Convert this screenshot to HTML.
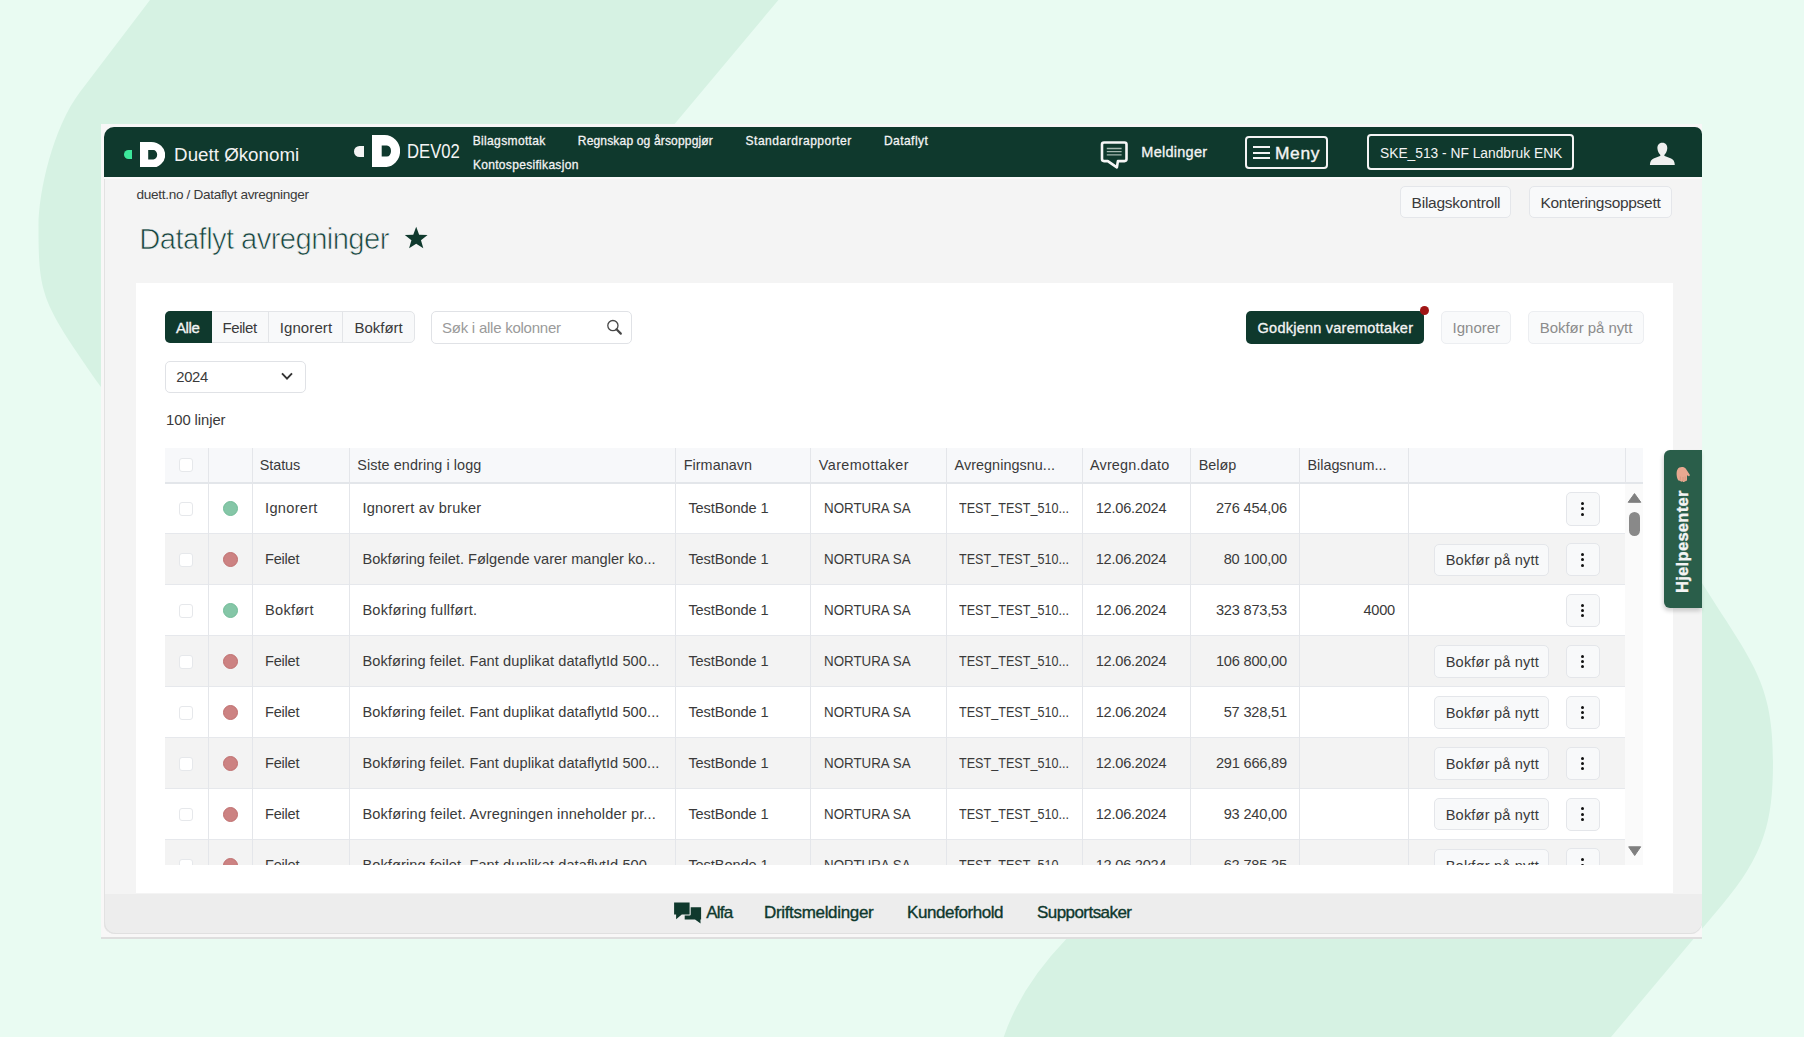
<!DOCTYPE html>
<html><head><meta charset="utf-8"><title>Dataflyt avregninger</title>
<style>
html,body{margin:0;padding:0;}
body{width:1804px;height:1037px;position:relative;overflow:hidden;background:#e9fbf2;font-family:"Liberation Sans",sans-serif;}
.r{position:absolute;}
.t{position:absolute;white-space:nowrap;}
</style></head><body>
<svg class="r" style="left:0;top:0" width="1804" height="1037" viewBox="0 0 1804 1037"><path d="M150,0 L80,92 C53.4,127 38.5,191 38.5,226 C38.5,296 41.5,302 101,387 L101,460 L400,460 L675,123.5 L778.4,0 Z" fill="#d6f2e3"/><path d="M1702,583 C1752.4,663 1773,682 1773,762 C1773,822 1764,855 1722,905 L1611,1037 L1003.7,1037 Q1021,986.3 1065.6,939.8 L1110,893.5 L1300,560 L1702,560 Z" fill="#d6f2e3"/></svg>
<div class="r" style="left:101.00px;top:124.00px;width:1601.00px;height:815.00px;background:#f8f7f7;"></div>
<div class="r" style="left:101.00px;top:936.70px;width:1601.00px;height:2.50px;background:#dedede;"></div>
<div class="r" style="left:104.00px;top:127.00px;width:1598.00px;height:807.00px;background:#f4f4f4;border-radius:10px 7px 10px 10px;box-shadow:inset 1px 0 0 #e2e2e2;"></div>
<div class="r" style="left:104.00px;top:127.00px;width:1598.00px;height:50.00px;background:#0f392d;border-radius:10px 7px 0 0;"></div>
<div class="r" style="left:104.00px;top:177.00px;width:1598.00px;height:1.50px;background:#fafafa;"></div>
<div class="r" style="left:104.00px;top:893.50px;width:1598.00px;height:40.50px;background:#ededed;border-radius:0 0 12px 12px;box-shadow:inset 0 -1px 0 #e0e0e0, inset 1px 0 0 #e2e2e2;"></div>
<div class="r" style="left:136.00px;top:282.60px;width:1536.70px;height:610.90px;background:#ffffff;"></div>
<div class="r" style="left:123.50px;top:149.60px;width:8.90px;height:9.70px;background:#3ce89b;border-radius:5px 0 0 5px;"></div>
<svg class="r" style="left:140.00px;top:141.50px" width="25.20" height="25.90" viewBox="0 0 25.20 25.90"><path fill-rule="evenodd" fill="#ffffff" d="M0,0 H11.34 A13.86,12.95 0 0 1 11.34,25.90 H0 Z M8.20,8.10 H13.36 A3.83,4.65 0 0 1 13.36,17.40 H8.20 Z"/></svg>
<div class="t" style="left:174.10px;top:145.73px;font-size:18.75px;line-height:18.75px;letter-spacing:0.003px;font-weight:400;color:#f2f2f2;">Duett Økonomi</div>
<div class="r" style="left:354.00px;top:145.50px;width:10.10px;height:11.90px;background:#f4f4f4;border-radius:6px 0 0 6px;"></div>
<svg class="r" style="left:372.40px;top:135.40px" width="28.10" height="32.10" viewBox="0 0 28.10 32.10"><path fill-rule="evenodd" fill="#ffffff" d="M0,0 H12.65 A15.46,16.05 0 0 1 12.65,32.10 H0 Z M9.70,10.40 H14.96 A4.05,5.60 0 0 1 14.96,21.60 H9.70 Z"/></svg>
<div class="t" style="left:407.00px;top:142.29px;font-size:19.50px;line-height:19.50px;letter-spacing:0.000px;font-weight:400;color:#f4f4f4;transform:scaleX(0.8558);transform-origin:0.00px 0;">DEV02</div>
<div class="t" style="left:472.70px;top:134.79px;font-size:12.06px;line-height:12.06px;letter-spacing:0.336px;font-weight:400;color:#f4f4f4;-webkit-text-stroke:0.27px #f4f4f4;">Bilagsmottak</div>
<div class="t" style="left:577.80px;top:134.79px;font-size:12.06px;line-height:12.06px;letter-spacing:0.150px;font-weight:400;color:#f4f4f4;-webkit-text-stroke:0.27px #f4f4f4;">Regnskap og årsoppgjør</div>
<div class="t" style="left:745.50px;top:134.79px;font-size:12.06px;line-height:12.06px;letter-spacing:0.502px;font-weight:400;color:#f4f4f4;-webkit-text-stroke:0.27px #f4f4f4;">Standardrapporter</div>
<div class="t" style="left:884.00px;top:134.79px;font-size:12.06px;line-height:12.06px;letter-spacing:0.417px;font-weight:400;color:#f4f4f4;-webkit-text-stroke:0.27px #f4f4f4;">Dataflyt</div>
<div class="t" style="left:472.90px;top:158.89px;font-size:12.06px;line-height:12.06px;letter-spacing:0.295px;font-weight:400;color:#f4f4f4;-webkit-text-stroke:0.27px #f4f4f4;">Kontospesifikasjon</div>
<svg class="r" style="left:1099px;top:140px" width="32" height="31" viewBox="0 0 32 31"><path d="M5,2.5 H25.5 Q27.5,2.5 27.5,4.5 V19.1 Q27.5,21.1 25.5,21.1 H18.9 L17.9,27.4 L8.8,21.1 H5 Q3,21.1 3,19.1 V4.5 Q3,2.5 5,2.5 Z" fill="none" stroke="#f6f6f6" stroke-width="2.6" stroke-linejoin="round"/><path d="M7.8,8.5 H22.6 M7.8,11.6 H22.6 M7.8,14.9 H22.6" stroke="#a5b8b0" stroke-width="1.4"/></svg>
<div class="t" style="left:1141.30px;top:145.13px;font-size:14.50px;line-height:14.50px;letter-spacing:0.268px;font-weight:400;color:#f4f4f4;-webkit-text-stroke:0.32px #f4f4f4;">Meldinger</div>
<div class="r" style="left:1244.90px;top:135.60px;width:83.20px;height:33.70px;box-sizing:border-box;border:2px solid #f4f4f4;border-radius:4px;"></div>
<div class="r" style="left:1252.80px;top:146.40px;width:17.40px;height:2.00px;background:#f4f4f4;"></div>
<div class="r" style="left:1252.80px;top:151.70px;width:17.40px;height:2.00px;background:#f4f4f4;"></div>
<div class="r" style="left:1252.80px;top:156.80px;width:17.40px;height:2.00px;background:#f4f4f4;"></div>
<div class="t" style="left:1275.00px;top:144.87px;font-size:17.40px;line-height:17.40px;letter-spacing:0.619px;font-weight:400;color:#f4f4f4;-webkit-text-stroke:0.38px #f4f4f4;">Meny</div>
<div class="r" style="left:1367.40px;top:133.70px;width:206.60px;height:36.40px;box-sizing:border-box;border:2px solid #f4f4f4;border-radius:4px;"></div>
<div class="t" style="left:1379.80px;top:145.48px;font-size:15.50px;line-height:15.50px;letter-spacing:0.000px;font-weight:400;color:#f4f4f4;transform:scaleX(0.8890);transform-origin:0.00px 0;">SKE_513 - NF Landbruk ENK</div>
<svg class="r" style="left:1649px;top:142px" width="27" height="24" viewBox="0 0 27 24"><path fill="#efefef" d="M13.3,0.8 C9.8,0.8 8.3,3.5 8.4,6.3 C8.5,9.2 10,11.6 11.4,13.1 C11.6,13.5 11.4,13.9 11,14.1 L4.6,16.5 C2.3,17.4 1,19.6 0.9,22.9 H25.8 C25.7,19.6 24.4,17.4 22.1,16.5 L15.7,14.1 C15.3,13.9 15.1,13.5 15.3,13.1 C16.7,11.6 18.2,9.2 18.3,6.3 C18.4,3.5 16.9,0.8 13.3,0.8 Z"/></svg>
<div class="t" style="left:136.60px;top:188.49px;font-size:13.60px;line-height:13.60px;letter-spacing:-0.326px;font-weight:400;color:#3a3a3a;">duett.no / Dataflyt avregninger</div>
<div class="t" style="left:139.30px;top:225.08px;font-size:29.20px;line-height:29.20px;letter-spacing:-0.586px;font-weight:400;color:#16443e;-webkit-text-stroke:0.7px #f4f4f4;">Dataflyt avregninger</div>
<svg class="r" style="left:403.6px;top:226.3px" width="24.4" height="24.4" viewBox="0 0 24 24"><path fill="#0f392d" d="M12,0.8 L14.9,8.6 L23.2,8.9 L16.7,14 L19,22 L12,17.4 L5,22 L7.3,14 L0.8,8.9 L9.1,8.6 Z"/></svg>
<div class="r" style="left:1400.30px;top:186.30px;width:110.80px;height:32.00px;background:#f8f9fa;box-sizing:border-box;border:1px solid #e4e6ea;border-radius:5px;"></div>
<div class="t" style="left:1411.60px;top:194.68px;font-size:15.50px;line-height:15.50px;letter-spacing:-0.248px;font-weight:400;color:#3a3a3a;">Bilagskontroll</div>
<div class="r" style="left:1528.90px;top:186.30px;width:143.00px;height:32.00px;background:#f8f9fa;box-sizing:border-box;border:1px solid #e4e6ea;border-radius:5px;"></div>
<div class="t" style="left:1540.50px;top:194.68px;font-size:15.50px;line-height:15.50px;letter-spacing:-0.296px;font-weight:400;color:#3a3a3a;">Konteringsoppsett</div>
<div class="r" style="left:164.70px;top:310.80px;width:250.00px;height:32.60px;background:#f8f9fa;box-sizing:border-box;border:1px solid #e3e5e8;border-radius:5px;"></div>
<div class="r" style="left:164.70px;top:310.80px;width:46.90px;height:32.60px;background:#0f392d;border-radius:5px 0 0 5px;"></div>
<div class="r" style="left:267.60px;top:311.80px;width:1.00px;height:30.60px;background:#e3e5e8;"></div>
<div class="r" style="left:342.40px;top:311.80px;width:1.00px;height:30.60px;background:#e3e5e8;"></div>
<div class="t" style="left:176.00px;top:319.80px;font-size:15.00px;line-height:15.00px;letter-spacing:-0.383px;font-weight:400;color:#f4f4f4;-webkit-text-stroke:0.33px #f4f4f4;">Alle</div>
<div class="t" style="left:222.40px;top:319.80px;font-size:15.00px;line-height:15.00px;letter-spacing:-0.375px;font-weight:400;color:#3a3a3a;">Feilet</div>
<div class="t" style="left:279.70px;top:319.80px;font-size:15.00px;line-height:15.00px;letter-spacing:0.104px;font-weight:400;color:#3a3a3a;">Ignorert</div>
<div class="t" style="left:354.40px;top:319.80px;font-size:15.00px;line-height:15.00px;letter-spacing:0.004px;font-weight:400;color:#3a3a3a;">Bokført</div>
<div class="r" style="left:430.50px;top:311.20px;width:201.20px;height:32.50px;background:#fff;box-sizing:border-box;border:1px solid #e0e2e6;border-radius:5px;"></div>
<div class="t" style="left:442.00px;top:320.20px;font-size:15.00px;line-height:15.00px;letter-spacing:-0.243px;font-weight:400;color:#9a9a9a;">Søk i alle kolonner</div>
<svg class="r" style="left:605px;top:318px" width="18" height="18" viewBox="0 0 18 18"><circle cx="7.9" cy="7.6" r="5.1" fill="none" stroke="#474747" stroke-width="1.3"/><path d="M11.5,11.3 L15.8,15.6" stroke="#474747" stroke-width="2.2" stroke-linecap="round"/></svg>
<div class="r" style="left:1245.70px;top:311.00px;width:178.60px;height:32.50px;background:#0f392d;border-radius:5px;"></div>
<div class="t" style="left:1257.60px;top:320.63px;font-size:14.50px;line-height:14.50px;letter-spacing:0.234px;font-weight:400;color:#f4f4f4;-webkit-text-stroke:0.32px #f4f4f4;">Godkjenn varemottaker</div>
<div class="r" style="left:1420.40px;top:306.20px;width:9.00px;height:9.00px;background:#a01515;border-radius:50%;"></div>
<div class="r" style="left:1441.20px;top:311.00px;width:70.30px;height:32.50px;background:#f9fafb;box-sizing:border-box;border:1px solid #eceef1;border-radius:5px;"></div>
<div class="t" style="left:1452.60px;top:320.20px;font-size:15.00px;line-height:15.00px;letter-spacing:-0.008px;font-weight:400;color:#8c8c8c;">Ignorer</div>
<div class="r" style="left:1527.60px;top:311.00px;width:116.10px;height:32.50px;background:#f9fafb;box-sizing:border-box;border:1px solid #eceef1;border-radius:5px;"></div>
<div class="t" style="left:1539.80px;top:320.20px;font-size:15.00px;line-height:15.00px;letter-spacing:-0.060px;font-weight:400;color:#8c8c8c;">Bokfør på nytt</div>
<div class="r" style="left:164.80px;top:360.50px;width:141.00px;height:32.50px;background:#fff;box-sizing:border-box;border:1px solid #e0e2e6;border-radius:5px;"></div>
<div class="t" style="left:176.30px;top:369.87px;font-size:14.80px;line-height:14.80px;letter-spacing:-0.343px;font-weight:400;color:#3a3a3a;">2024</div>
<svg class="r" style="left:280px;top:371px" width="14" height="10" viewBox="0 0 14 10"><path d="M2,2.3 L7,7.6 L12,2.3" fill="none" stroke="#333" stroke-width="1.9"/></svg>
<div class="t" style="left:166.10px;top:413.27px;font-size:14.80px;line-height:14.80px;letter-spacing:-0.076px;font-weight:400;color:#3a3a3a;">100 linjer</div>
<div class="r" style="left:165.00px;top:447.80px;width:1478.40px;height:34.20px;background:#f7f8fa;"></div>
<div class="r" style="left:165.00px;top:482.00px;width:1478.40px;height:2.00px;background:#e3e6ea;"></div>
<div class="r" style="left:1625.40px;top:484.00px;width:18.00px;height:381.30px;background:#fafafa;"></div>
<div class="r" style="left:0;top:0;width:1804px;height:865.3px;overflow:hidden;">
<div class="r" style="left:165.00px;top:483.50px;width:1460.40px;height:50.87px;background:#ffffff;"></div>
<div class="r" style="left:165.00px;top:533.37px;width:1460.40px;height:1.50px;background:#e6e8ec;"></div>
<div class="r" style="left:179.10px;top:502.44px;width:13.80px;height:13.80px;background:#fff;box-sizing:border-box;border:1px solid #e6e8eb;border-radius:3px;"></div>
<div class="r" style="left:222.50px;top:501.44px;width:15.00px;height:15.00px;background:#85c6a7;border-radius:50%;box-sizing:border-box;border:1px solid #72bc98;"></div>
<div class="t" style="left:265.10px;top:501.48px;font-size:14.60px;line-height:14.60px;letter-spacing:0.286px;font-weight:400;color:#3a3a3a;">Ignorert</div>
<div class="t" style="left:362.40px;top:501.48px;font-size:14.60px;line-height:14.60px;letter-spacing:0.214px;font-weight:400;color:#3a3a3a;">Ignorert av bruker</div>
<div class="t" style="left:688.40px;top:501.48px;font-size:14.60px;line-height:14.60px;letter-spacing:-0.098px;font-weight:400;color:#3a3a3a;">TestBonde 1</div>
<div class="t" style="left:823.60px;top:501.48px;font-size:14.60px;line-height:14.60px;letter-spacing:0.000px;font-weight:400;color:#3a3a3a;transform:scaleX(0.9147);transform-origin:0.00px 0;">NORTURA SA</div>
<div class="t" style="left:959.10px;top:501.48px;font-size:14.60px;line-height:14.60px;letter-spacing:0.000px;font-weight:400;color:#3a3a3a;transform:scaleX(0.8635);transform-origin:0.00px 0;">TEST_TEST_510...</div>
<div class="t" style="left:1095.70px;top:501.48px;font-size:14.60px;line-height:14.60px;letter-spacing:-0.241px;font-weight:400;color:#3a3a3a;">12.06.2024</div>
<div class="t" style="left:1215.90px;top:501.48px;font-size:14.60px;line-height:14.60px;letter-spacing:-0.197px;font-weight:400;color:#3a3a3a;">276 454,06</div>
<div class="r" style="left:1566.30px;top:492.33px;width:33.30px;height:33.20px;background:#f8f9fa;box-sizing:border-box;border:1px solid #e4e6ea;border-radius:5px;"></div>
<div class="r" style="left:1580.50px;top:502.24px;width:3.00px;height:3.00px;background:#111;border-radius:50%;"></div>
<div class="r" style="left:1580.50px;top:507.44px;width:3.00px;height:3.00px;background:#111;border-radius:50%;"></div>
<div class="r" style="left:1580.50px;top:512.63px;width:3.00px;height:3.00px;background:#111;border-radius:50%;"></div>
<div class="r" style="left:165.00px;top:534.37px;width:1460.40px;height:50.87px;background:#f3f3f3;"></div>
<div class="r" style="left:165.00px;top:584.24px;width:1460.40px;height:1.50px;background:#e6e8ec;"></div>
<div class="r" style="left:179.10px;top:553.31px;width:13.80px;height:13.80px;background:#fff;box-sizing:border-box;border:1px solid #e6e8eb;border-radius:3px;"></div>
<div class="r" style="left:222.50px;top:552.31px;width:15.00px;height:15.00px;background:#cc8282;border-radius:50%;box-sizing:border-box;border:1px solid #c07070;"></div>
<div class="t" style="left:265.10px;top:552.35px;font-size:14.60px;line-height:14.60px;letter-spacing:-0.259px;font-weight:400;color:#3a3a3a;">Feilet</div>
<div class="t" style="left:362.40px;top:552.35px;font-size:14.60px;line-height:14.60px;letter-spacing:0.010px;font-weight:400;color:#3a3a3a;">Bokføring feilet. Følgende varer mangler ko...</div>
<div class="t" style="left:688.40px;top:552.35px;font-size:14.60px;line-height:14.60px;letter-spacing:-0.098px;font-weight:400;color:#3a3a3a;">TestBonde 1</div>
<div class="t" style="left:823.60px;top:552.35px;font-size:14.60px;line-height:14.60px;letter-spacing:0.000px;font-weight:400;color:#3a3a3a;transform:scaleX(0.9147);transform-origin:0.00px 0;">NORTURA SA</div>
<div class="t" style="left:959.10px;top:552.35px;font-size:14.60px;line-height:14.60px;letter-spacing:0.000px;font-weight:400;color:#3a3a3a;transform:scaleX(0.8635);transform-origin:0.00px 0;">TEST_TEST_510...</div>
<div class="t" style="left:1095.70px;top:552.35px;font-size:14.60px;line-height:14.60px;letter-spacing:-0.241px;font-weight:400;color:#3a3a3a;">12.06.2024</div>
<div class="t" style="left:1223.70px;top:552.35px;font-size:14.60px;line-height:14.60px;letter-spacing:-0.184px;font-weight:400;color:#3a3a3a;">80 100,00</div>
<div class="r" style="left:1434.00px;top:543.51px;width:115.40px;height:32.60px;background:#f8f9fa;box-sizing:border-box;border:1px solid #e4e6ea;border-radius:5px;"></div>
<div class="t" style="left:1445.70px;top:553.45px;font-size:14.60px;line-height:14.60px;letter-spacing:0.170px;font-weight:400;color:#3a3a3a;">Bokfør på nytt</div>
<div class="r" style="left:1566.30px;top:543.21px;width:33.30px;height:33.20px;background:#f8f9fa;box-sizing:border-box;border:1px solid #e4e6ea;border-radius:5px;"></div>
<div class="r" style="left:1580.50px;top:553.11px;width:3.00px;height:3.00px;background:#111;border-radius:50%;"></div>
<div class="r" style="left:1580.50px;top:558.31px;width:3.00px;height:3.00px;background:#111;border-radius:50%;"></div>
<div class="r" style="left:1580.50px;top:563.51px;width:3.00px;height:3.00px;background:#111;border-radius:50%;"></div>
<div class="r" style="left:165.00px;top:585.24px;width:1460.40px;height:50.87px;background:#ffffff;"></div>
<div class="r" style="left:165.00px;top:635.11px;width:1460.40px;height:1.50px;background:#e6e8ec;"></div>
<div class="r" style="left:179.10px;top:604.17px;width:13.80px;height:13.80px;background:#fff;box-sizing:border-box;border:1px solid #e6e8eb;border-radius:3px;"></div>
<div class="r" style="left:222.50px;top:603.17px;width:15.00px;height:15.00px;background:#85c6a7;border-radius:50%;box-sizing:border-box;border:1px solid #72bc98;"></div>
<div class="t" style="left:265.10px;top:603.22px;font-size:14.60px;line-height:14.60px;letter-spacing:0.219px;font-weight:400;color:#3a3a3a;">Bokført</div>
<div class="t" style="left:362.40px;top:603.22px;font-size:14.60px;line-height:14.60px;letter-spacing:0.196px;font-weight:400;color:#3a3a3a;">Bokføring fullført.</div>
<div class="t" style="left:688.40px;top:603.22px;font-size:14.60px;line-height:14.60px;letter-spacing:-0.098px;font-weight:400;color:#3a3a3a;">TestBonde 1</div>
<div class="t" style="left:823.60px;top:603.22px;font-size:14.60px;line-height:14.60px;letter-spacing:0.000px;font-weight:400;color:#3a3a3a;transform:scaleX(0.9147);transform-origin:0.00px 0;">NORTURA SA</div>
<div class="t" style="left:959.10px;top:603.22px;font-size:14.60px;line-height:14.60px;letter-spacing:0.000px;font-weight:400;color:#3a3a3a;transform:scaleX(0.8635);transform-origin:0.00px 0;">TEST_TEST_510...</div>
<div class="t" style="left:1095.70px;top:603.22px;font-size:14.60px;line-height:14.60px;letter-spacing:-0.241px;font-weight:400;color:#3a3a3a;">12.06.2024</div>
<div class="t" style="left:1215.90px;top:603.22px;font-size:14.60px;line-height:14.60px;letter-spacing:-0.197px;font-weight:400;color:#3a3a3a;">323 873,53</div>
<div class="t" style="left:1363.50px;top:603.22px;font-size:14.60px;line-height:14.60px;letter-spacing:-0.262px;font-weight:400;color:#3a3a3a;">4000</div>
<div class="r" style="left:1566.30px;top:594.07px;width:33.30px;height:33.20px;background:#f8f9fa;box-sizing:border-box;border:1px solid #e4e6ea;border-radius:5px;"></div>
<div class="r" style="left:1580.50px;top:603.97px;width:3.00px;height:3.00px;background:#111;border-radius:50%;"></div>
<div class="r" style="left:1580.50px;top:609.17px;width:3.00px;height:3.00px;background:#111;border-radius:50%;"></div>
<div class="r" style="left:1580.50px;top:614.38px;width:3.00px;height:3.00px;background:#111;border-radius:50%;"></div>
<div class="r" style="left:165.00px;top:636.11px;width:1460.40px;height:50.87px;background:#f3f3f3;"></div>
<div class="r" style="left:165.00px;top:685.98px;width:1460.40px;height:1.50px;background:#e6e8ec;"></div>
<div class="r" style="left:179.10px;top:655.05px;width:13.80px;height:13.80px;background:#fff;box-sizing:border-box;border:1px solid #e6e8eb;border-radius:3px;"></div>
<div class="r" style="left:222.50px;top:654.05px;width:15.00px;height:15.00px;background:#cc8282;border-radius:50%;box-sizing:border-box;border:1px solid #c07070;"></div>
<div class="t" style="left:265.10px;top:654.09px;font-size:14.60px;line-height:14.60px;letter-spacing:-0.259px;font-weight:400;color:#3a3a3a;">Feilet</div>
<div class="t" style="left:362.40px;top:654.09px;font-size:14.60px;line-height:14.60px;letter-spacing:0.086px;font-weight:400;color:#3a3a3a;">Bokføring feilet. Fant duplikat dataflytId 500...</div>
<div class="t" style="left:688.40px;top:654.09px;font-size:14.60px;line-height:14.60px;letter-spacing:-0.098px;font-weight:400;color:#3a3a3a;">TestBonde 1</div>
<div class="t" style="left:823.60px;top:654.09px;font-size:14.60px;line-height:14.60px;letter-spacing:0.000px;font-weight:400;color:#3a3a3a;transform:scaleX(0.9147);transform-origin:0.00px 0;">NORTURA SA</div>
<div class="t" style="left:959.10px;top:654.09px;font-size:14.60px;line-height:14.60px;letter-spacing:0.000px;font-weight:400;color:#3a3a3a;transform:scaleX(0.8635);transform-origin:0.00px 0;">TEST_TEST_510...</div>
<div class="t" style="left:1095.70px;top:654.09px;font-size:14.60px;line-height:14.60px;letter-spacing:-0.241px;font-weight:400;color:#3a3a3a;">12.06.2024</div>
<div class="t" style="left:1215.90px;top:654.09px;font-size:14.60px;line-height:14.60px;letter-spacing:-0.197px;font-weight:400;color:#3a3a3a;">106 800,00</div>
<div class="r" style="left:1434.00px;top:645.25px;width:115.40px;height:32.60px;background:#f8f9fa;box-sizing:border-box;border:1px solid #e4e6ea;border-radius:5px;"></div>
<div class="t" style="left:1445.70px;top:655.19px;font-size:14.60px;line-height:14.60px;letter-spacing:0.170px;font-weight:400;color:#3a3a3a;">Bokfør på nytt</div>
<div class="r" style="left:1566.30px;top:644.95px;width:33.30px;height:33.20px;background:#f8f9fa;box-sizing:border-box;border:1px solid #e4e6ea;border-radius:5px;"></div>
<div class="r" style="left:1580.50px;top:654.85px;width:3.00px;height:3.00px;background:#111;border-radius:50%;"></div>
<div class="r" style="left:1580.50px;top:660.05px;width:3.00px;height:3.00px;background:#111;border-radius:50%;"></div>
<div class="r" style="left:1580.50px;top:665.25px;width:3.00px;height:3.00px;background:#111;border-radius:50%;"></div>
<div class="r" style="left:165.00px;top:686.98px;width:1460.40px;height:50.87px;background:#ffffff;"></div>
<div class="r" style="left:165.00px;top:736.85px;width:1460.40px;height:1.50px;background:#e6e8ec;"></div>
<div class="r" style="left:179.10px;top:705.91px;width:13.80px;height:13.80px;background:#fff;box-sizing:border-box;border:1px solid #e6e8eb;border-radius:3px;"></div>
<div class="r" style="left:222.50px;top:704.91px;width:15.00px;height:15.00px;background:#cc8282;border-radius:50%;box-sizing:border-box;border:1px solid #c07070;"></div>
<div class="t" style="left:265.10px;top:704.96px;font-size:14.60px;line-height:14.60px;letter-spacing:-0.259px;font-weight:400;color:#3a3a3a;">Feilet</div>
<div class="t" style="left:362.40px;top:704.96px;font-size:14.60px;line-height:14.60px;letter-spacing:0.086px;font-weight:400;color:#3a3a3a;">Bokføring feilet. Fant duplikat dataflytId 500...</div>
<div class="t" style="left:688.40px;top:704.96px;font-size:14.60px;line-height:14.60px;letter-spacing:-0.098px;font-weight:400;color:#3a3a3a;">TestBonde 1</div>
<div class="t" style="left:823.60px;top:704.96px;font-size:14.60px;line-height:14.60px;letter-spacing:0.000px;font-weight:400;color:#3a3a3a;transform:scaleX(0.9147);transform-origin:0.00px 0;">NORTURA SA</div>
<div class="t" style="left:959.10px;top:704.96px;font-size:14.60px;line-height:14.60px;letter-spacing:0.000px;font-weight:400;color:#3a3a3a;transform:scaleX(0.8635);transform-origin:0.00px 0;">TEST_TEST_510...</div>
<div class="t" style="left:1095.70px;top:704.96px;font-size:14.60px;line-height:14.60px;letter-spacing:-0.241px;font-weight:400;color:#3a3a3a;">12.06.2024</div>
<div class="t" style="left:1223.70px;top:704.96px;font-size:14.60px;line-height:14.60px;letter-spacing:-0.184px;font-weight:400;color:#3a3a3a;">57 328,51</div>
<div class="r" style="left:1434.00px;top:696.12px;width:115.40px;height:32.60px;background:#f8f9fa;box-sizing:border-box;border:1px solid #e4e6ea;border-radius:5px;"></div>
<div class="t" style="left:1445.70px;top:706.06px;font-size:14.60px;line-height:14.60px;letter-spacing:0.170px;font-weight:400;color:#3a3a3a;">Bokfør på nytt</div>
<div class="r" style="left:1566.30px;top:695.81px;width:33.30px;height:33.20px;background:#f8f9fa;box-sizing:border-box;border:1px solid #e4e6ea;border-radius:5px;"></div>
<div class="r" style="left:1580.50px;top:705.71px;width:3.00px;height:3.00px;background:#111;border-radius:50%;"></div>
<div class="r" style="left:1580.50px;top:710.91px;width:3.00px;height:3.00px;background:#111;border-radius:50%;"></div>
<div class="r" style="left:1580.50px;top:716.12px;width:3.00px;height:3.00px;background:#111;border-radius:50%;"></div>
<div class="r" style="left:165.00px;top:737.85px;width:1460.40px;height:50.87px;background:#f3f3f3;"></div>
<div class="r" style="left:165.00px;top:787.72px;width:1460.40px;height:1.50px;background:#e6e8ec;"></div>
<div class="r" style="left:179.10px;top:756.79px;width:13.80px;height:13.80px;background:#fff;box-sizing:border-box;border:1px solid #e6e8eb;border-radius:3px;"></div>
<div class="r" style="left:222.50px;top:755.79px;width:15.00px;height:15.00px;background:#cc8282;border-radius:50%;box-sizing:border-box;border:1px solid #c07070;"></div>
<div class="t" style="left:265.10px;top:755.83px;font-size:14.60px;line-height:14.60px;letter-spacing:-0.259px;font-weight:400;color:#3a3a3a;">Feilet</div>
<div class="t" style="left:362.40px;top:755.83px;font-size:14.60px;line-height:14.60px;letter-spacing:0.086px;font-weight:400;color:#3a3a3a;">Bokføring feilet. Fant duplikat dataflytId 500...</div>
<div class="t" style="left:688.40px;top:755.83px;font-size:14.60px;line-height:14.60px;letter-spacing:-0.098px;font-weight:400;color:#3a3a3a;">TestBonde 1</div>
<div class="t" style="left:823.60px;top:755.83px;font-size:14.60px;line-height:14.60px;letter-spacing:0.000px;font-weight:400;color:#3a3a3a;transform:scaleX(0.9147);transform-origin:0.00px 0;">NORTURA SA</div>
<div class="t" style="left:959.10px;top:755.83px;font-size:14.60px;line-height:14.60px;letter-spacing:0.000px;font-weight:400;color:#3a3a3a;transform:scaleX(0.8635);transform-origin:0.00px 0;">TEST_TEST_510...</div>
<div class="t" style="left:1095.70px;top:755.83px;font-size:14.60px;line-height:14.60px;letter-spacing:-0.241px;font-weight:400;color:#3a3a3a;">12.06.2024</div>
<div class="t" style="left:1215.90px;top:755.83px;font-size:14.60px;line-height:14.60px;letter-spacing:-0.197px;font-weight:400;color:#3a3a3a;">291 666,89</div>
<div class="r" style="left:1434.00px;top:746.99px;width:115.40px;height:32.60px;background:#f8f9fa;box-sizing:border-box;border:1px solid #e4e6ea;border-radius:5px;"></div>
<div class="t" style="left:1445.70px;top:756.93px;font-size:14.60px;line-height:14.60px;letter-spacing:0.170px;font-weight:400;color:#3a3a3a;">Bokfør på nytt</div>
<div class="r" style="left:1566.30px;top:746.69px;width:33.30px;height:33.20px;background:#f8f9fa;box-sizing:border-box;border:1px solid #e4e6ea;border-radius:5px;"></div>
<div class="r" style="left:1580.50px;top:756.59px;width:3.00px;height:3.00px;background:#111;border-radius:50%;"></div>
<div class="r" style="left:1580.50px;top:761.79px;width:3.00px;height:3.00px;background:#111;border-radius:50%;"></div>
<div class="r" style="left:1580.50px;top:766.99px;width:3.00px;height:3.00px;background:#111;border-radius:50%;"></div>
<div class="r" style="left:165.00px;top:788.72px;width:1460.40px;height:50.87px;background:#ffffff;"></div>
<div class="r" style="left:165.00px;top:838.59px;width:1460.40px;height:1.50px;background:#e6e8ec;"></div>
<div class="r" style="left:179.10px;top:807.65px;width:13.80px;height:13.80px;background:#fff;box-sizing:border-box;border:1px solid #e6e8eb;border-radius:3px;"></div>
<div class="r" style="left:222.50px;top:806.65px;width:15.00px;height:15.00px;background:#cc8282;border-radius:50%;box-sizing:border-box;border:1px solid #c07070;"></div>
<div class="t" style="left:265.10px;top:806.70px;font-size:14.60px;line-height:14.60px;letter-spacing:-0.259px;font-weight:400;color:#3a3a3a;">Feilet</div>
<div class="t" style="left:362.40px;top:806.70px;font-size:14.60px;line-height:14.60px;letter-spacing:0.144px;font-weight:400;color:#3a3a3a;">Bokføring feilet. Avregningen inneholder pr...</div>
<div class="t" style="left:688.40px;top:806.70px;font-size:14.60px;line-height:14.60px;letter-spacing:-0.098px;font-weight:400;color:#3a3a3a;">TestBonde 1</div>
<div class="t" style="left:823.60px;top:806.70px;font-size:14.60px;line-height:14.60px;letter-spacing:0.000px;font-weight:400;color:#3a3a3a;transform:scaleX(0.9147);transform-origin:0.00px 0;">NORTURA SA</div>
<div class="t" style="left:959.10px;top:806.70px;font-size:14.60px;line-height:14.60px;letter-spacing:0.000px;font-weight:400;color:#3a3a3a;transform:scaleX(0.8635);transform-origin:0.00px 0;">TEST_TEST_510...</div>
<div class="t" style="left:1095.70px;top:806.70px;font-size:14.60px;line-height:14.60px;letter-spacing:-0.241px;font-weight:400;color:#3a3a3a;">12.06.2024</div>
<div class="t" style="left:1223.70px;top:806.70px;font-size:14.60px;line-height:14.60px;letter-spacing:-0.184px;font-weight:400;color:#3a3a3a;">93 240,00</div>
<div class="r" style="left:1434.00px;top:797.86px;width:115.40px;height:32.60px;background:#f8f9fa;box-sizing:border-box;border:1px solid #e4e6ea;border-radius:5px;"></div>
<div class="t" style="left:1445.70px;top:807.80px;font-size:14.60px;line-height:14.60px;letter-spacing:0.170px;font-weight:400;color:#3a3a3a;">Bokfør på nytt</div>
<div class="r" style="left:1566.30px;top:797.55px;width:33.30px;height:33.20px;background:#f8f9fa;box-sizing:border-box;border:1px solid #e4e6ea;border-radius:5px;"></div>
<div class="r" style="left:1580.50px;top:807.45px;width:3.00px;height:3.00px;background:#111;border-radius:50%;"></div>
<div class="r" style="left:1580.50px;top:812.65px;width:3.00px;height:3.00px;background:#111;border-radius:50%;"></div>
<div class="r" style="left:1580.50px;top:817.86px;width:3.00px;height:3.00px;background:#111;border-radius:50%;"></div>
<div class="r" style="left:165.00px;top:839.59px;width:1460.40px;height:50.87px;background:#f3f3f3;"></div>
<div class="r" style="left:165.00px;top:889.46px;width:1460.40px;height:1.50px;background:#e6e8ec;"></div>
<div class="r" style="left:179.10px;top:858.52px;width:13.80px;height:13.80px;background:#fff;box-sizing:border-box;border:1px solid #e6e8eb;border-radius:3px;"></div>
<div class="r" style="left:222.50px;top:857.52px;width:15.00px;height:15.00px;background:#cc8282;border-radius:50%;box-sizing:border-box;border:1px solid #c07070;"></div>
<div class="t" style="left:265.10px;top:857.57px;font-size:14.60px;line-height:14.60px;letter-spacing:-0.259px;font-weight:400;color:#3a3a3a;">Feilet</div>
<div class="t" style="left:362.40px;top:857.57px;font-size:14.60px;line-height:14.60px;letter-spacing:0.086px;font-weight:400;color:#3a3a3a;">Bokføring feilet. Fant duplikat dataflytId 500...</div>
<div class="t" style="left:688.40px;top:857.57px;font-size:14.60px;line-height:14.60px;letter-spacing:-0.098px;font-weight:400;color:#3a3a3a;">TestBonde 1</div>
<div class="t" style="left:823.60px;top:857.57px;font-size:14.60px;line-height:14.60px;letter-spacing:0.000px;font-weight:400;color:#3a3a3a;transform:scaleX(0.9147);transform-origin:0.00px 0;">NORTURA SA</div>
<div class="t" style="left:959.10px;top:857.57px;font-size:14.60px;line-height:14.60px;letter-spacing:0.000px;font-weight:400;color:#3a3a3a;transform:scaleX(0.8635);transform-origin:0.00px 0;">TEST_TEST_510...</div>
<div class="t" style="left:1095.70px;top:857.57px;font-size:14.60px;line-height:14.60px;letter-spacing:-0.241px;font-weight:400;color:#3a3a3a;">12.06.2024</div>
<div class="t" style="left:1223.70px;top:857.57px;font-size:14.60px;line-height:14.60px;letter-spacing:-0.184px;font-weight:400;color:#3a3a3a;">62 785,25</div>
<div class="r" style="left:1434.00px;top:848.72px;width:115.40px;height:32.60px;background:#f8f9fa;box-sizing:border-box;border:1px solid #e4e6ea;border-radius:5px;"></div>
<div class="t" style="left:1445.70px;top:858.67px;font-size:14.60px;line-height:14.60px;letter-spacing:0.170px;font-weight:400;color:#3a3a3a;">Bokfør på nytt</div>
<div class="r" style="left:1566.30px;top:848.42px;width:33.30px;height:33.20px;background:#f8f9fa;box-sizing:border-box;border:1px solid #e4e6ea;border-radius:5px;"></div>
<div class="r" style="left:1580.50px;top:858.32px;width:3.00px;height:3.00px;background:#111;border-radius:50%;"></div>
<div class="r" style="left:1580.50px;top:863.52px;width:3.00px;height:3.00px;background:#111;border-radius:50%;"></div>
<div class="r" style="left:1580.50px;top:868.72px;width:3.00px;height:3.00px;background:#111;border-radius:50%;"></div>
</div>
<div class="r" style="left:207.90px;top:447.80px;width:1.00px;height:417.50px;background:#e4e6ea;"></div>
<div class="r" style="left:251.50px;top:447.80px;width:1.00px;height:417.50px;background:#e4e6ea;"></div>
<div class="r" style="left:349.10px;top:447.80px;width:1.00px;height:417.50px;background:#e4e6ea;"></div>
<div class="r" style="left:674.90px;top:447.80px;width:1.00px;height:417.50px;background:#e4e6ea;"></div>
<div class="r" style="left:810.10px;top:447.80px;width:1.00px;height:417.50px;background:#e4e6ea;"></div>
<div class="r" style="left:945.80px;top:447.80px;width:1.00px;height:417.50px;background:#e4e6ea;"></div>
<div class="r" style="left:1081.80px;top:447.80px;width:1.00px;height:417.50px;background:#e4e6ea;"></div>
<div class="r" style="left:1190.10px;top:447.80px;width:1.00px;height:417.50px;background:#e4e6ea;"></div>
<div class="r" style="left:1299.20px;top:447.80px;width:1.00px;height:417.50px;background:#e4e6ea;"></div>
<div class="r" style="left:1407.60px;top:447.80px;width:1.00px;height:417.50px;background:#e4e6ea;"></div>
<div class="r" style="left:1624.90px;top:447.80px;width:1.00px;height:36.20px;background:#e4e6ea;"></div>
<div class="r" style="left:179.10px;top:457.70px;width:13.80px;height:14.50px;background:#fff;box-sizing:border-box;border:1px solid #e6e8eb;border-radius:3px;"></div>
<div class="t" style="left:259.80px;top:458.11px;font-size:14.40px;line-height:14.40px;letter-spacing:-0.085px;font-weight:400;color:#3a3a3a;">Status</div>
<div class="t" style="left:357.20px;top:458.11px;font-size:14.40px;line-height:14.40px;letter-spacing:0.091px;font-weight:400;color:#3a3a3a;">Siste endring i logg</div>
<div class="t" style="left:683.70px;top:458.11px;font-size:14.40px;line-height:14.40px;letter-spacing:0.045px;font-weight:400;color:#3a3a3a;">Firmanavn</div>
<div class="t" style="left:818.80px;top:458.11px;font-size:14.40px;line-height:14.40px;letter-spacing:0.401px;font-weight:400;color:#3a3a3a;">Varemottaker</div>
<div class="t" style="left:954.50px;top:458.11px;font-size:14.40px;line-height:14.40px;letter-spacing:0.051px;font-weight:400;color:#3a3a3a;">Avregningsnu...</div>
<div class="t" style="left:1090.00px;top:458.11px;font-size:14.40px;line-height:14.40px;letter-spacing:0.180px;font-weight:400;color:#3a3a3a;">Avregn.dato</div>
<div class="t" style="left:1198.80px;top:458.11px;font-size:14.40px;line-height:14.40px;letter-spacing:-0.021px;font-weight:400;color:#3a3a3a;">Beløp</div>
<div class="t" style="left:1307.50px;top:458.11px;font-size:14.40px;line-height:14.40px;letter-spacing:-0.025px;font-weight:400;color:#3a3a3a;">Bilagsnum...</div>
<svg class="r" style="left:1627px;top:492px" width="16" height="12" viewBox="0 0 16 12"><path d="M1.2,10.3 L7.5,1.6 L13.8,10.3 Z" fill="#7f7f7f" stroke="#7f7f7f" stroke-width="1" stroke-linejoin="round"/></svg>
<div class="r" style="left:1628.80px;top:512.30px;width:11.30px;height:23.90px;background:#898989;border-radius:6px;"></div>
<svg class="r" style="left:1627px;top:845px" width="16" height="12" viewBox="0 0 16 12"><path d="M1.7,1.8 L7.7,10.5 L13.7,1.8 Z" fill="#7f7f7f" stroke="#7f7f7f" stroke-width="1" stroke-linejoin="round"/></svg>
<svg class="r" style="left:668px;top:896px" width="36" height="30" viewBox="0 0 36 30"><path fill="#0f392d" d="M16.7,11.3 H33.1 V23.6 H32.4 L32.6,27.6 L27,23.6 H16.7 Z"/><path fill="#0f392d" stroke="#ededed" stroke-width="2.2" stroke-linejoin="round" d="M6.1,6.4 H21.6 V18.5 H13.8 L8.1,23.2 L8.1,18.5 H6.1 Z"/><path fill="#0f392d" d="M6.1,6.4 H21.6 V18.5 H13.8 L8.1,23.2 L8.1,18.5 H6.1 Z"/></svg>
<div class="t" style="left:706.20px;top:904.11px;font-size:17.00px;line-height:17.00px;letter-spacing:-0.742px;font-weight:400;color:#0f392d;-webkit-text-stroke:0.37px #0f392d;">Alfa</div>
<div class="t" style="left:764.00px;top:904.11px;font-size:17.00px;line-height:17.00px;letter-spacing:-0.330px;font-weight:400;color:#0f392d;-webkit-text-stroke:0.37px #0f392d;">Driftsmeldinger</div>
<div class="t" style="left:907.10px;top:904.11px;font-size:17.00px;line-height:17.00px;letter-spacing:-0.423px;font-weight:400;color:#0f392d;-webkit-text-stroke:0.37px #0f392d;">Kundeforhold</div>
<div class="t" style="left:1037.00px;top:904.11px;font-size:17.00px;line-height:17.00px;letter-spacing:-0.559px;font-weight:400;color:#0f392d;-webkit-text-stroke:0.37px #0f392d;">Supportsaker</div>
<div class="r" style="left:1663.50px;top:449.60px;width:38.30px;height:158.90px;background:#2a5e4a;border-radius:6px 0 0 6px;box-shadow:-1px 3px 4px rgba(0,0,0,0.18);"></div>
<div class="t" style="left:1684.3px;top:541.6px;width:0;height:0;"><div style="position:absolute;left:0;top:0;transform:rotate(-90deg);transform-origin:0 0;"></div></div>
<div class="t" style="left:1688.4px;top:592.9px;transform:rotate(-90deg);transform-origin:0 0;"><div style="position:absolute;left:-0.00px;top:-13.97px;font-size:16.5px;line-height:16.5px;font-weight:700;color:#f4f4f4;-webkit-text-stroke:0.35px #f4f4f4;letter-spacing:0.311px;white-space:nowrap;">Hjelpesenter</div></div>
<svg class="r" style="left:1676px;top:466px" width="15" height="17" viewBox="0 0 15 17"><path fill="#e9a890" d="M2,14 C0.5,11 0,6 1.5,3.5 C3,0.6 8,0.2 10,3 L13.6,8.6 C14.2,9.6 13.4,10.6 12.4,10 L11,9.2 L11,13.8 C11,15 10,15.5 9.2,15 C8.6,16.4 7,16.4 6.6,15.2 C5.8,16 4.2,15.6 4,14.6 C3.2,15 2.4,14.8 2,14 Z"/><path d="M4.3,10.5 V14 M7,11 V15 M9.2,10.5 V14.5" stroke="#c98a72" stroke-width="0.7" opacity="0.7"/></svg>
</body></html>
